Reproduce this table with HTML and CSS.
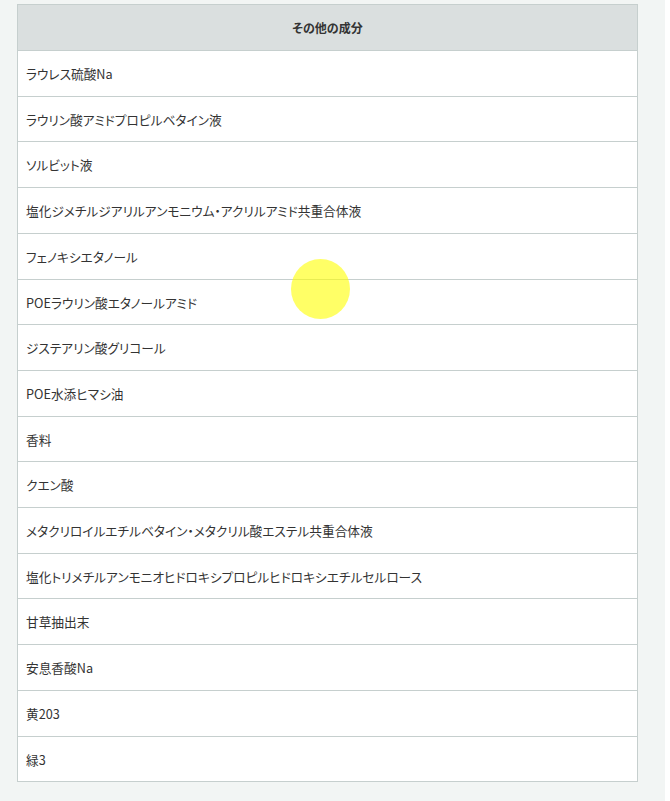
FILE: index.html
```html
<!DOCTYPE html>
<html>

<head>
  <meta charset="utf-8">
  <title>その他の成分</title>
  <link rel="stylesheet" href="styles.css">
</head>

<body>
  <div id="page">
    <table class="ingredients">
      <thead>
        <tr>
          <th>その他の成分</th>
        </tr>
      </thead>
      <tbody>
        <tr><td>ラウレス硫酸Na</td></tr>
        <tr><td>ラウリン酸アミドプロピルベタイン液</td></tr>
        <tr><td>ソルビット液</td></tr>
        <tr><td>塩化ジメチルジアリルアンモニウム・アクリルアミド共重合体液</td></tr>
        <tr><td>フェノキシエタノール</td></tr>
        <tr><td>POEラウリン酸エタノールアミド</td></tr>
        <tr><td>ジステアリン酸グリコール</td></tr>
        <tr><td>POE水添ヒマシ油</td></tr>
        <tr><td>香料</td></tr>
        <tr><td>クエン酸</td></tr>
        <tr><td>メタクリロイルエチルベタイン・メタクリル酸エステル共重合体液</td></tr>
        <tr><td>塩化トリメチルアンモニオヒドロキシプロピルヒドロキシエチルセルロース</td></tr>
        <tr><td>甘草抽出末</td></tr>
        <tr><td>安息香酸Na</td></tr>
        <tr><td>黄203</td></tr>
        <tr><td>緑3</td></tr>
      </tbody>
    </table>
    <div id="cursor"></div>
  </div>
</body>

</html>
```

FILE: styles.css
```css
* {
  font-family: "Noto Sans CJK JP", "Noto Sans", sans-serif;
}

body {
  margin: 0;
  background: white;
}

#page {
  position: relative;
  width: 665px;
  min-height: 100vh;
  background: #f2f5f4;
  padding: 4px 0 20px 17px;
  box-sizing: border-box;
}

.ingredients {
  width: 621px;
  border-collapse: collapse;
  background: white;
  color: #333;
  font-size: 12.7px;
  font-feature-settings: "palt";
}

.ingredients th,
.ingredients td {
  border: 1px solid #c6cfce;
  padding: 12px 8px 11px;
  line-height: 21.7px;
  text-align: left;
}

.ingredients th {
  background: #dadfdf;
  text-align: center;
  font-weight: bold;
  font-size: 12px;
  height: 22px;
}

/* click highlight */
#cursor {
  position: absolute;
  left: 291px;
  top: 259px;
  width: 59px;
  height: 60px;
  border-radius: 50%;
  background: rgba(255, 255, 0, 0.6);
}
```
